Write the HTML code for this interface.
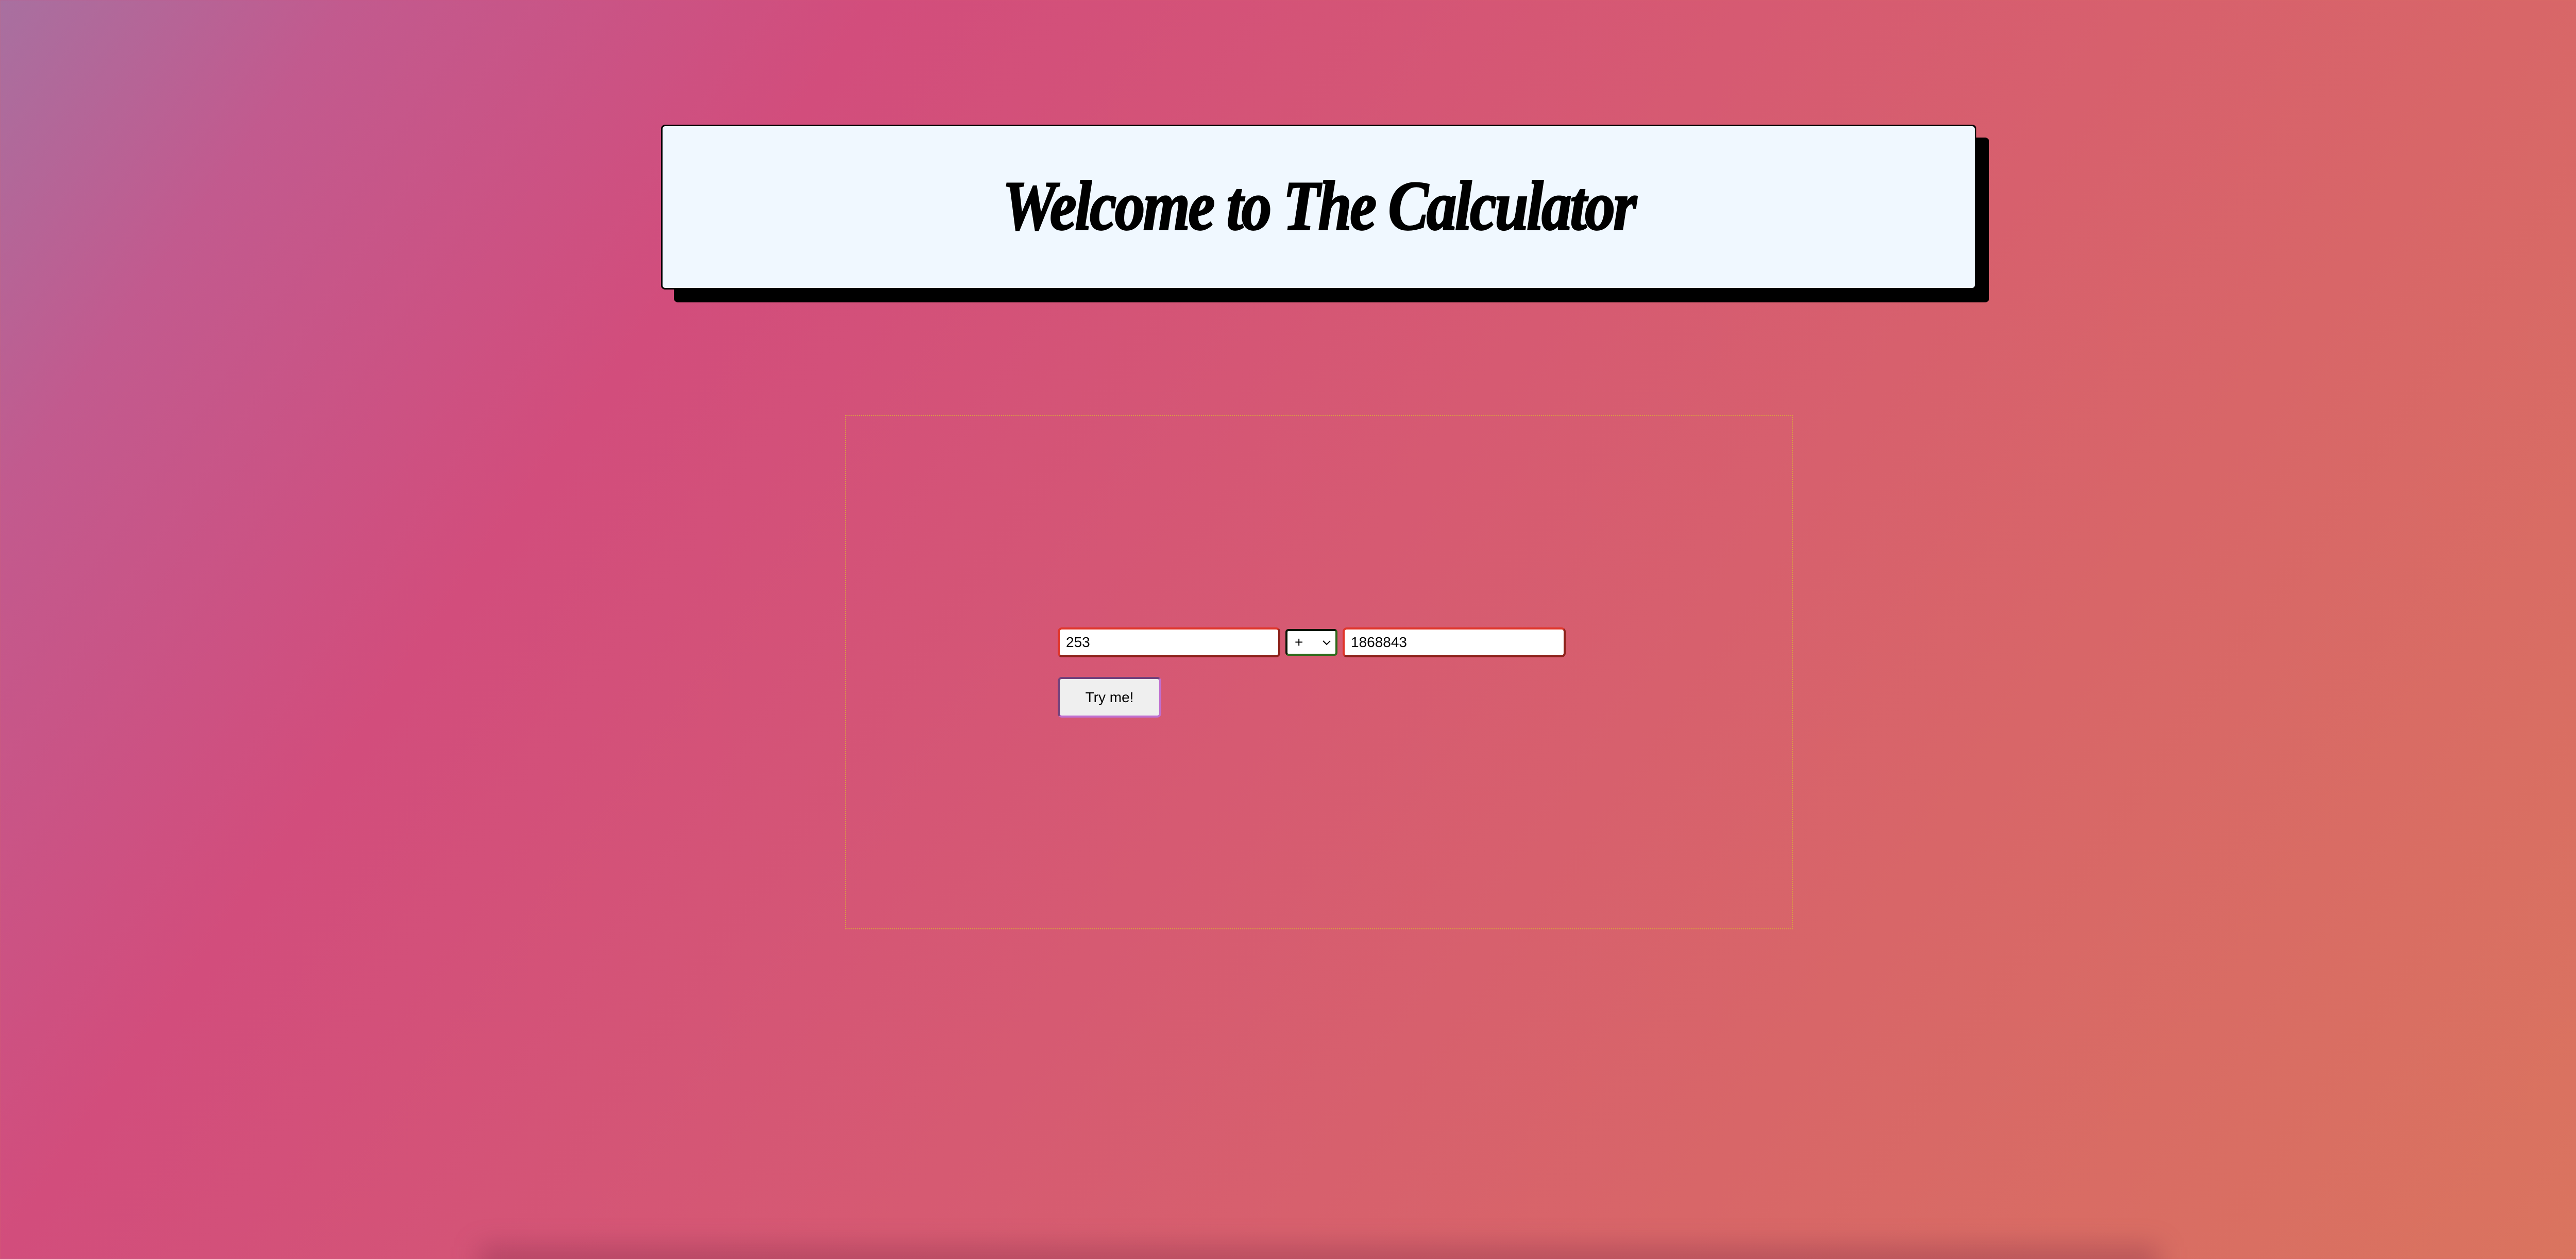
<!DOCTYPE html>
<html><head><meta charset="utf-8"><style>
html,body{margin:0;padding:0;width:5120px;height:2444px;overflow:hidden}
body{background:linear-gradient(125deg,#a870a0 0%,#c25a8e 10%,#d24d7c 25%,#d65a72 50%,#d86668 72%,#da755e 100%);font-family:"Liberation Sans",sans-serif;position:relative}
.hdr{position:absolute;left:1283px;top:242px;width:2547px;height:314px;background:#f0f8ff;border:3px solid #000;border-radius:8px;box-shadow:25px 25px 0 #000;display:flex;align-items:center;justify-content:center}
.hdr h1{margin:0;font-family:"Liberation Serif",serif;font-style:italic;font-weight:bold;font-size:136px;letter-spacing:-4px;transform:scaleX(0.86);-webkit-text-stroke:3px #000;white-space:nowrap;color:#000;position:relative;top:-2px}
.box{position:absolute;left:1640px;top:806px;width:1836px;height:994px;border:2px dotted #d8a040}
.in{position:absolute;box-sizing:border-box;background:#fff;font-family:"Liberation Sans",sans-serif;font-size:28px;color:#000;padding-left:12px;display:flex;align-items:center}
.i1{left:2053px;top:1218px;width:432px;height:58px;border:4px outset #e0352a;border-radius:8px}
.i2{left:2606px;top:1218px;width:433px;height:58px;border:4px outset #e0352a;border-radius:8px}
.sel{left:2495px;top:1221px;width:101px;height:52px;border:4px inset #2e6a1c;border-radius:6px;padding-left:14px}
.btn{position:absolute;left:2053px;top:1314px;width:201px;height:79px;box-sizing:border-box;background:#efefef;border:4px inset #c070d0;border-radius:8px;font-size:28px;display:flex;align-items:center;justify-content:center}
.shadow{position:absolute;left:930px;top:2420px;width:3260px;height:60px;background:rgba(120,40,70,.35);filter:blur(25px)}
</style></head><body>
<div class="hdr"><h1>Welcome to The Calculator</h1></div>
<div class="box"></div>
<div class="in i1">253</div>
<div class="in sel">+<svg style="position:absolute;right:8px;top:17px" width="18" height="12" viewBox="0 0 18 12"><path d="M2 2 L9 9 L16 2" fill="none" stroke="#000" stroke-width="2"/></svg></div>
<div class="in i2">1868843</div>
<div class="btn">Try me!</div>
<div class="shadow"></div>
</body></html>
